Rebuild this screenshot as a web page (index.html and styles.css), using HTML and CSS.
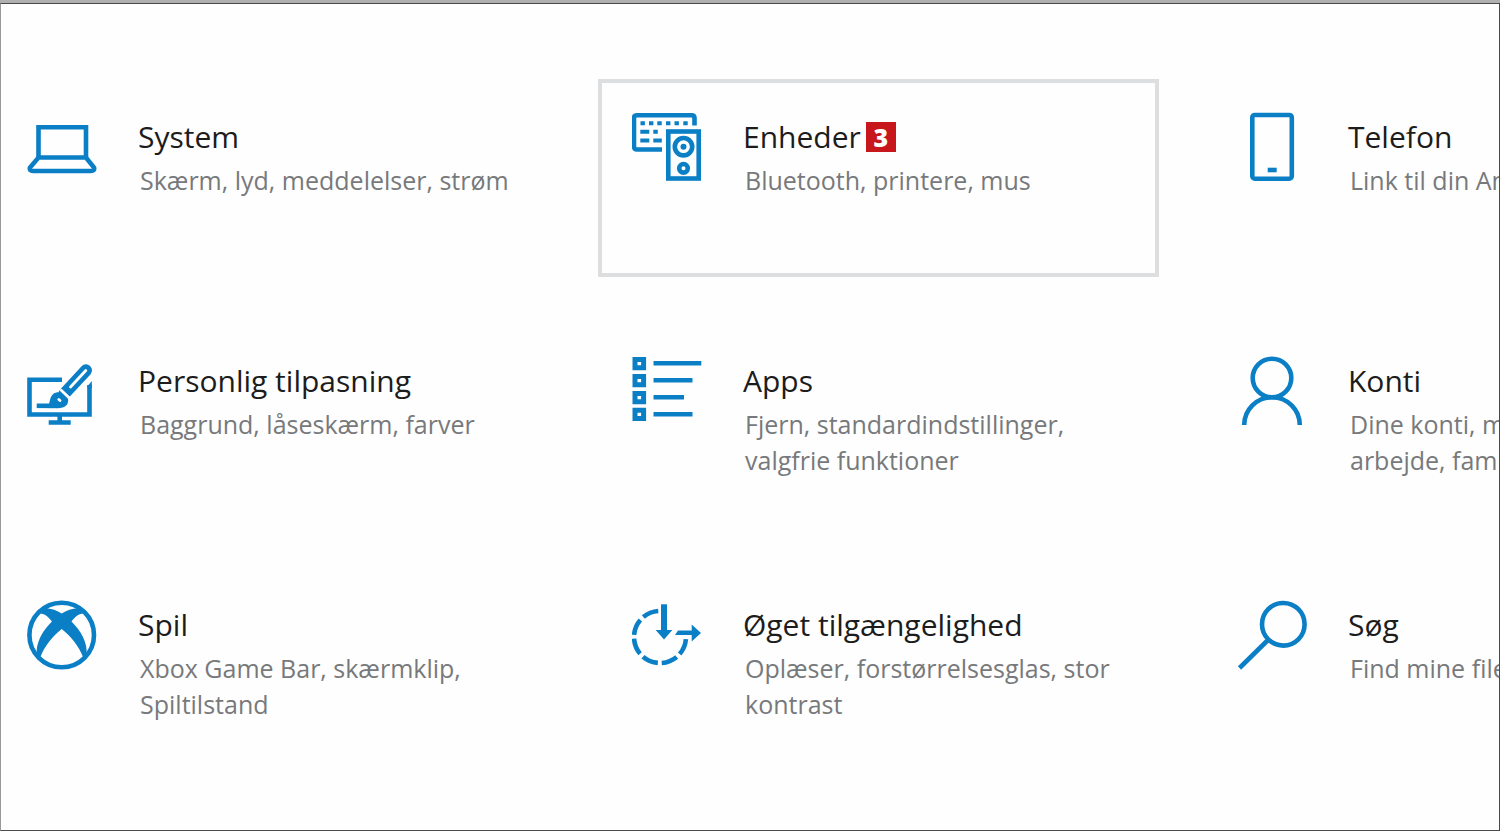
FILE: index.html
```html
<!DOCTYPE html>
<html lang="da">
<head>
    <meta charset="UTF-8">
    <meta name="viewport" content="width=device-width, initial-scale=1.0">
    <title>Indstillinger</title>
    <link rel="stylesheet" href="styles.css">
</head>
<body>
    <main class="window">
        <nav class="tiles">
            <a class="tile" href="#system">
                <svg class="icon" viewBox="0 0 70 70" aria-hidden="true">
                    <path d="M11.5 45V15.3H59V45"/>
                    <path d="M11.5 45.5H59L67 55.5Q68 59 64 59H6Q2 59 3 55.5Z"/>
                </svg>
                <div class="text">
                    <h2>System</h2>
                    <p>Skærm, lyd, meddelelser, strøm</p>
                </div>
            </a>

            <a class="tile active" href="#enheder">
                <svg class="icon" viewBox="0 0 70 70" aria-hidden="true">
                    <path d="M30 37.5H5Q2 37.5 2 34.5V6Q2 3.2 5 3.2H59.5Q62.5 3.2 62.5 6V13.5"/>
                    <path class="keys" d="M8.5 11.3h4.4M17 11.3h4.4M25.3 11.3h4.4M34 11.3h4.4M42.5 11.3h4.4M51.3 11.3h4.4M8.3 19.8h9M21.3 19.8h4.5M8.3 28.5h9M21.3 28.5h8.5"/>
                    <rect x="36.3" y="19.5" width="30.4" height="47"/>
                    <circle cx="51.5" cy="34.7" r="8.7"/>
                    <circle class="fill" cx="51.5" cy="34.7" r="3"/>
                    <circle cx="51.5" cy="56.3" r="4.3"/>
                </svg>
                <div class="text">
                    <h2>Enheder <span class="badge">3</span></h2>
                    <p>Bluetooth, printere, mus</p>
                </div>
            </a>

            <a class="tile" href="#telefon">
                <svg class="icon" viewBox="0 0 70 70" aria-hidden="true">
                    <rect x="15.3" y="3" width="39.5" height="63.7" rx="2.5"/>
                    <path d="M30.7 58h9"/>
                </svg>
                <div class="text">
                    <h2>Telefon</h2>
                    <p>Link til din Android, iPhone</p>
                </div>
            </a>

            <a class="tile" href="#personlig">
                <svg class="icon" viewBox="0 0 70 70" aria-hidden="true">
                    <path d="M35 23.8H2.5V58.5H62.5V29"/>
                    <path class="fill" d="M60.2 30.5L64.8 25V32H60.2Z"/>
                    <path d="M32.7 58V67M21.7 66.5H43.7"/>
                    <path class="handle" d="M59 14.3L37.5 37.5"/>
                    <path class="core" d="M58.8 14.5L43.5 31"/>
                    <path d="M9.7 49.8H26"/>
                    <path class="fill" d="M18 52C24.5 50 21 42 26.5 37.8C31.5 34 41 37.5 41.2 44.5C41 50.5 36 52.2 31 52.2Z"/>
                    <path class="core" d="M31.8 43.5L33 44.5M34.2 34.2L41.8 41.6"/>
                </svg>
                <div class="text">
                    <h2>Personlig tilpasning</h2>
                    <p>Baggrund, låseskærm, farver</p>
                </div>
            </a>

            <a class="tile" href="#apps">
                <svg class="icon" viewBox="0 0 70 70" aria-hidden="true">
                    <path class="boxes" d="M3 3.5h8.6v8.2h-8.6zM3 20.5h8.6v8.2h-8.6zM3 37.5h8.6v8.2h-8.6zM3 54.3h8.6v8.2h-8.6z"/>
                    <path d="M21.5 7.3H69.3M21.5 24.3H60.5M21.5 41.3H52M21.5 58.3H60.5"/>
                </svg>
                <div class="text">
                    <h2>Apps</h2>
                    <p>Fjern, standardindstillinger, valgfrie funktioner</p>
                </div>
            </a>

            <a class="tile" href="#konti">
                <svg class="icon" viewBox="0 0 70 70" aria-hidden="true">
                    <circle cx="35" cy="22" r="19.3"/>
                    <path d="M7.2 69A27.8 27.8 0 0 1 62.8 69"/>
                </svg>
                <div class="text">
                    <h2>Konti</h2>
                    <p>Dine konti, mail, synkronisering, arbejde, familie</p>
                </div>
            </a>

            <a class="tile" href="#spil">
                <svg class="icon" viewBox="0 0 70 70" aria-hidden="true">
                    <circle cx="34.7" cy="35" r="32.3"/>
                    <path class="fill" d="M11 10C18 6 28 9 34.7 13.5C41.4 9 51.4 6 58.4 10L57 13.5C52 13 47.5 17.5 44.5 21.5C54 31 61 43 59.5 55L56 57C52 46 43.5 36 34.7 29C25.9 36 17.4 46 13.4 57L9.9 55C8.4 43 15.4 31 24.9 21.5C21.9 17.5 17.4 13 12.4 13.5Z"/>
                </svg>
                <div class="text">
                    <h2>Spil</h2>
                    <p>Xbox Game Bar, skærmklip, Spiltilstand</p>
                </div>
            </a>

            <a class="tile" href="#tilgaengelighed">
                <svg class="icon" viewBox="0 0 70 70" aria-hidden="true">
                    <circle cx="28" cy="37" r="26" pathLength="360" stroke-dasharray="0 5 36 9 36 9 36 9 36 9 36 9 36 200"/>
                    <path class="thick" d="M32 4.3V31"/>
                    <path class="fill" d="M23.7 30H40.3L32 39.5Z"/>
                    <path class="fill" d="M43 35L46 30.5H59.7V24.5L69 33L59.7 41.5V35Z"/>
                </svg>
                <div class="text">
                    <h2>Øget tilgængelighed</h2>
                    <p>Oplæser, forstørrelsesglas, stor kontrast</p>
                </div>
            </a>

            <a class="tile" href="#soeg">
                <svg class="icon" viewBox="0 0 70 70" aria-hidden="true">
                    <circle cx="46.3" cy="24.3" r="21.3"/>
                    <path d="M31 40L2.5 68"/>
                </svg>
                <div class="text">
                    <h2>Søg</h2>
                    <p>Find mine filer, tilladelser</p>
                </div>
            </a>
        </nav>
    </main>
</body>
</html>
```

FILE: styles.css
```css
* {
    box-sizing: border-box;
}

body {
    margin: 0;
    background-color: #fefefe;
    font-family: "Open Sans", "Noto Sans", sans-serif;
    border-top: 3px solid #b0b0b0;
}

.window {
    min-height: calc(100vh - 3px);
    padding-top: 75px;
    border: 1px solid #4a4a4a;
    border-left-color: #999;
    overflow: hidden;
}

/* The first column starts just outside the window edge */
.tiles {
    display: grid;
    grid-template-columns: repeat(3, 561px);
    grid-auto-rows: 198px;
    gap: 46px 44px;
    margin-left: -8px;
}

.tile {
    display: flex;
    gap: 41px;
    padding: 29px 20px 0 30px;
    border: 4px solid transparent;
    color: #1c1c1c;
    text-decoration: none;
}

.tile.active,
.tile:hover {
    border-color: #dcdedf;
}

.icon {
    flex: none;
    width: 70px;
    height: 70px;
    fill: none;
    stroke: #0b7fc6;
    stroke-width: 4.6;
}

.icon .fill {
    fill: #0b7fc6;
    stroke: none;
}

.icon .keys {
    stroke-width: 4;
}

.icon .boxes {
    stroke-width: 5;
}

.icon .thick {
    stroke-width: 6;
}

.icon .handle {
    stroke-width: 12;
    stroke-linecap: round;
}

.icon .core {
    stroke: #fefefe;
    stroke-width: 2.8;
    stroke-linecap: round;
}

.text {
    flex: 1;
}

h2 {
    display: flex;
    align-items: center;
    gap: 5px;
    margin: 2px 0;
    font-size: 30px;
    font-weight: 400;
    line-height: 46px;
}

p {
    margin: 0;
    padding-left: 2px;
    color: #77797b;
    font-size: 25px;
    line-height: 36px;
}

.badge {
    width: 30px;
    height: 30px;
    background-color: #c8161d;
    color: #fff;
    font-size: 25px;
    font-weight: 800;
    line-height: 30px;
    text-align: center;
}
```
